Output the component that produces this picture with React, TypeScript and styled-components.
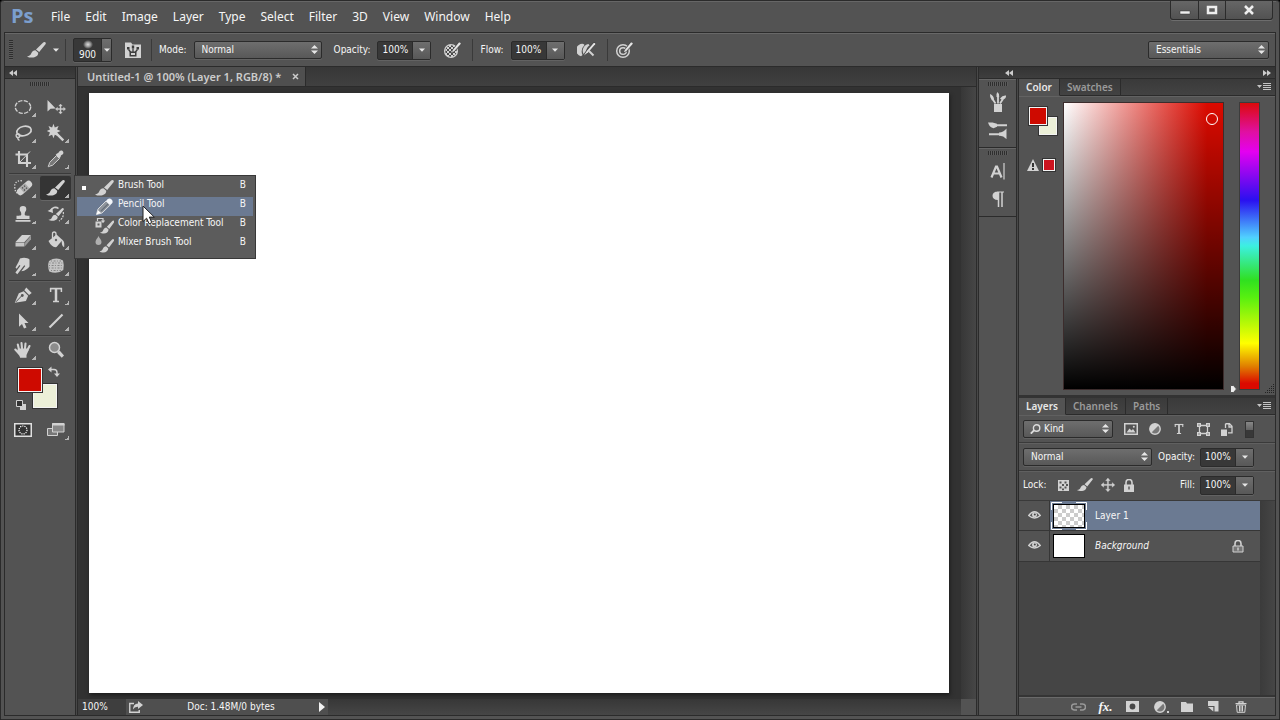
import React from 'react';
import styled, { createGlobalStyle, css } from 'styled-components';

const uiFont = '"DejaVu Sans Condensed", "Noto Sans", sans-serif';
const titleFont = '"Noto Sans", "Open Sans", sans-serif';
const dark = '#2b2b2b';
const panel = '#535353';
const glyph = '#d2d2d2';

const GlobalStyle = createGlobalStyle`
  * { box-sizing: border-box; }
  body { margin: 0; background: #000; font-family: ${uiFont}; font-size: 10px; line-height: 12px; color: #f6f6f6; }
  button, input, select { font: inherit; color: inherit; margin: 0; padding: 0; border: 0; background: none; border-radius: 0; }
  button { cursor: default; }
  svg { display: block; flex: none; }
`;

/* ---------- window frame ---------- */

const Frame = styled.div`
  min-height: 100vh;
  display: flex;
  flex-direction: column;
  background: ${panel};
  border: 1px solid ${dark};
  border-radius: 3px 3px 0 0;
  padding: 0 3px 3px;
`;
const MenuBar = styled.header`
  display: flex;
  height: 31px;
  padding: 0 3px 0 7px;
  border-top: 1px solid #666;
`;
const Logo = styled.span`
  width: 33px;
  font: bold 20px/27px "Open Sans", sans-serif;
  color: #7c9fce;
`;
const MenuItems = styled.nav`
  flex: 1;
  display: flex;
`;
const MenuItem = styled.button`
  padding: 0 8px 0 7px;
  font: 12px/28px ${titleFont};
`;
const WindowButtons = styled.div`
  display: flex;
  height: 19px;
  margin-top: -1px;
  border: 1px solid ${dark};
  border-top: 0;
  border-radius: 0 0 3px 3px;
  background: linear-gradient(#666, #525252);
  box-shadow: 0 1px #6d6d6d;
`;
const WindowButton = styled.button<{ $wide?: boolean }>`
  display: grid;
  place-items: center;
  width: ${p => (p.$wide ? 47 : 27)}px;
  & + & { border-left: 1px solid ${dark}; }
`;
const Body = styled.div`
  flex: 1;
  display: flex;
  flex-direction: column;
  border: 1px solid ${dark};
`;

/* ---------- shared controls ---------- */

const well = css`
  border: 1px solid ${dark};
  border-radius: 2px;
  box-shadow: 0 1px #626262;
`;
const SelectBox = styled.span<{ $grow?: boolean }>`
  position: relative;
  display: block;
  ${p => p.$grow && 'flex: 1;'}
`;
const SelectField = styled.select<{ $width?: number; $indent?: number }>`
  appearance: none;
  display: block;
  width: ${p => (p.$width ? `${p.$width}px` : '100%')};
  height: 18px;
  padding: 0 18px 0 ${p => p.$indent ?? 7}px;
  background: linear-gradient(#6e6e6e, #585858);
  ${well}
`;
const SelectMark = styled.span<{ $left?: boolean }>`
  position: absolute;
  top: 4px;
  ${p => (p.$left ? 'left: 7px;' : 'right: 4px;')}
  pointer-events: none;
`;
const NumberBox = styled.span`
  display: flex;
  width: 54px;
  height: 19px;
  background: #383838;
  ${well}
`;
const NumberInput = styled.input`
  width: 34px;
  padding-left: 4px;
`;
const DropButton = styled.button`
  flex: 1;
  display: grid;
  place-items: center;
  border-left: 1px solid ${dark};
  background: linear-gradient(#6e6e6e, #585858);
`;
const Grip = styled.span<{ $vertical?: boolean }>`
  display: block;
  width: ${p => (p.$vertical ? 4 : 20)}px;
  height: ${p => (p.$vertical ? 20 : 4)}px;
  background: repeating-linear-gradient(${p => (p.$vertical ? '180deg' : '90deg')}, #2e2e2e 0 1px, #5c5c5c 1px 2px);
`;

const Updown = () => (
  <svg width="7" height="9" viewBox="0 0 7 9" fill="#e6e6e6"><path d="M3.5 0 7 3.6H0zM3.5 9 7 5.4H0z" /></svg>
);
const Down = () => (
  <svg width="6" height="4" viewBox="0 0 6 4" fill="#e6e6e6"><path d="M0 .5h6L3 3.8z" /></svg>
);

function Dropdown({ label, value, width, lens }: { label: string; value: string; width?: number; lens?: boolean }) {
  return (
    <SelectBox $grow={!width}>
      <SelectField aria-label={label} $width={width} $indent={lens ? 20 : undefined} defaultValue={value}>
        <option>{value}</option>
      </SelectField>
      {lens && (
        <SelectMark $left>
          <svg width="11" height="10" viewBox="0 0 11 10" fill="none" stroke="#dcdcdc" strokeWidth="1.4">
            <circle cx="6.6" cy="4" r="3.2" /><path d="M4.2 6.2 .8 9.6" strokeWidth="1.9" />
          </svg>
        </SelectMark>
      )}
      <SelectMark><Updown /></SelectMark>
    </SelectBox>
  );
}
function Percent({ id }: { id: string }) {
  return (
    <NumberBox>
      <NumberInput id={id} defaultValue="100%" />
      <DropButton aria-label="Open slider"><Down /></DropButton>
    </NumberBox>
  );
}

/* ---------- icons ---------- */

const Icon = ({ w = 20, h = 20, children }: { w?: number; h?: number; children: React.ReactNode }) => (
  <svg width={w} height={h} viewBox={`0 0 ${w} ${h}`} fill={glyph}>{children}</svg>
);
const Stroke = ({ d, w = 1.5, c = glyph, dash }: { d: string; w?: number; c?: string; dash?: string }) => (
  <path d={d} fill="none" stroke={c} strokeWidth={w} strokeDasharray={dash} />
);
const brushPath = 'M17.200 0Q19.200 0 18.700 1.900L12.200 10 9 7.400 16.200.5ZM8.400 8.300 11.200 10.700C11.400 13.600 8.600 15.600 5 15.600 3 15.600 1.200 15.200 0 14.400 2.600 14 3.600 13 4.300 11.300 5.100 9.300 6.600 8.300 8.400 8.300Z';
const BrushIcon = () => <Icon w={19} h={16}><path d={brushPath} /></Icon>;
const SmallBrush = () => <Icon w={16} h={14}><path d={brushPath} transform="scale(.84)" /></Icon>;
const PencilIcon = () => (
  <Icon w={19} h={17}>
    <path d="M1.500 16.500 3 11 11 3 15.200 7 7 15Z" fill="#8f959c" stroke="#d5d8dc" />
    <path d="M1.500 16.500 3 12.200 6 15Z" fill="#fff" />
    <Stroke d="M6 13 13 6" c="#666e78" w={1.300} />
    <path d="m11 3 1.500-1.700a3.100 3.100 0 0 1 4.400 4.300L15.200 7Z" fill="#f2f6fa" />
  </Icon>
);
const ReplaceIcon = () => (
  <Icon w={19} h={17}>
    <path d={brushPath} transform="translate(5 3.500) scale(.76 .84)" />
    <path d="M.5 4.500h6v6h-6zM2.500 6.500v2h2v-2z" fillRule="evenodd" />
    <Stroke d="M2.500 4V1.500H8V4" w={1.200} /><path d="M5.800 3.500h4.400L8 6.300z" />
  </Icon>
);
const MixerIcon = () => (
  <Icon w={19} h={17}>
    <path d={brushPath} transform="translate(4.500 3) scale(.78 .86)" />
    <path d="M3.500 0C4.500 2.500 6.500 3.800 6.500 6a3 3 0 0 1-6 0C.5 3.800 2.500 2.500 3.500 0z" fill="#b0b0b0" />
  </Icon>
);
const LockIcon = ({ outline }: { outline?: boolean }) => (
  <Icon w={12} h={13}>
    <Stroke d="M3 6V3.500a3 3 0 0 1 6 0V6" w={1.600} />
    {outline
      ? <><path d="M1 6h10v6H1z" fill="#777" stroke={glyph} /><path d="M5.300 7.500h1.400v3H5.300z" /></>
      : <path d="M1 5.500h10V13H1zm4.300 2v3h1.400v-3z" fillRule="evenodd" />}
  </Icon>
);
const MarqueeIcon = () => (
  <Icon><ellipse cx="10" cy="10" rx="7.700" ry="6.400" fill="none" stroke={glyph} strokeWidth="1.400" strokeDasharray="4.200 1.400" /></Icon>
);
const arrowsPath = 'M9 0 12 3.500H9.800V8.200H14.500V6L18 9 14.500 12V9.800H9.800V14.500H12L9 18 6 14.500H8.200V9.800H3.500V12L0 9 3.500 6V8.200H8.200V3.500H6Z';
const MoveIcon = () => (
  <Icon><path d="M1.500 3v11.500l3-2.800 5.200-.2z" /><path d={arrowsPath} transform="translate(9.500 7) scale(.56)" stroke={glyph} strokeWidth=".7" /></Icon>
);
const LassoIcon = () => (
  <Icon>
    <ellipse cx="11" cy="8" rx="7.300" ry="4.600" fill="none" stroke={glyph} strokeWidth="1.700" transform="rotate(-13 11 8)" />
    <circle cx="5" cy="12.500" r="1.900" fill="none" stroke={glyph} strokeWidth="1.300" /><Stroke d="M4.500 14.300q.5 2.400 2 3.200" w={1.400} />
  </Icon>
);
const WandIcon = () => (
  <Icon>
    <path d="m7.500.800 1.300 3.600 3.800-1.500-1.500 3.700 3.500 1.400-3.500 1.500 1.500 3.700-3.800-1.500-1.300 3.600-1.400-3.600-3.600 1.500 1.500-3.700L.8 8l3.200-1.400-1.500-3.700 3.600 1.500z" />
    <Stroke d="m9.500 9.700 7.800 7.700" w={2.400} />
  </Icon>
);
const CropIcon = () => (
  <Icon><Stroke d="M2.500 5.500h11.500v12.500M6 2v12h12" w={2.100} /><Stroke d="m7 13 10-10.500" w={1} /></Icon>
);
const DropperIcon = () => (
  <Icon>
    <path d="m11 4.500 1.200-.6 1.300-1.700c2-2.200 5.300.8 3.300 3l-1.900 1.300-.3 1.500-1.300 1.200-3.600-3.500z" />
    <path d="m10.500 6.500 3 3-7 6.800-2.700.8-1 .8-.8-.8.900-1 .7-2.600z" fill="#777" stroke={glyph} />
  </Icon>
);
const HealIcon = () => (
  <Icon>
    <Stroke d="M9 2.800C3 2 1.200 6 1.800 9.500 2 13 3 14.500 5 15.500" w={1.300} dash="1.400 1.400" />
    <g transform="rotate(-42 11.500 10)">
      <rect x="2.500" y="6.500" width="18" height="7" rx="3.500" /><rect x="8" y="6.500" width="7" height="7" fill="#aaa" />
      <path d="M9.500 8h1.300v1.300H9.500zm2.700 0h1.300v1.300h-1.300zM9.500 10.800h1.300v1.300H9.500zm2.700 0h1.300v1.300h-1.300z" fill="#4c4c4c" />
    </g>
  </Icon>
);
const StampIcon = () => (
  <Icon><path d="M10 2a3.300 3.300 0 0 1 3.300 3.300c0 2-1.600 2.600-1.600 4.700 0 1.500.6 1.700 4.800 1.700V15h-13v-3.300c4.200 0 4.800-.2 4.800-1.700 0-2.100-1.600-2.700-1.600-4.700A3.300 3.300 0 0 1 10 2zM2.500 16h15v1.700h-15z" /></Icon>
);
const HistoryIcon = () => (
  <Icon>
    <path d={brushPath} transform="translate(2.500 4) scale(.82)" />
    <Stroke d="M4 7.500C6 3 10 2.500 12.500 4.500" w={1.600} /><path d="M1.500 7 7 9 6.500 4.500z" />
    <Stroke d="M17.300 8c.5 4-1 7-4.300 9" w={1.200} dash="2 1.200" />
  </Icon>
);
const EraserIcon = () => (
  <Icon><path d="M2.500 12 9 5h9l-6.500 7z" /><path d="M2.500 12.500h9v4h-9z" fill="#c5c5c5" /><path d="M12 12.500 18 5.500v3.700l-6 7z" fill="#999" /></Icon>
);
const BucketIcon = () => (
  <Icon>
    <path d="m2.500 11 8-6.500 6 5.500-6 7q-4.500 1-8-6z" /><path d="M15.500 9.500c3 1.200 3 4 2.700 7.500-2.200-.5-2.400-3-2.700-7.500z" />
    <Stroke d="M10 10V4q0-2-1.800-2T6.500 4v4" w={1.300} /><circle cx="10" cy="10" r="1.200" fill="#666" />
  </Icon>
);
const SmudgeIcon = () => (
  <Icon>
    <path d="M7 2.500c4-1.500 8-.5 9.500 1v7c-2 2.500-4 4.200-8.200 4.800l4-5.300-1-.8-7 9-1.900-1.700 5-6.700-1-.7-2.700 3.600-1.200-1.200L5.500 6z" />
  </Icon>
);
const SpongeIcon = () => (
  <Icon>
    <path d="M3 5q7-4.500 14-.5 1.500 5 .3 9.500Q11 18.800 3.300 15.500 1.200 10 3 5z" fill="#c4c4c4" />
    <Stroke d="M3.500 7h13M3 9.500h14M3 12h14M5 14.500h10M5 5h10" c="#858585" w={1} dash="1 1.600 2 1.300" />
  </Icon>
);
const PenIcon = () => (
  <Icon>
    <path d="m1.800 17.700 4-9.500 4.900-2 4.500 4.500-2.300 5.200z" /><path d="m11.300 5.200 2-2.800 5.400 5.500-2.600 2z" />
    <Stroke d="M3 16.800 8.500 11" c="#555" w={1} /><circle cx="9.300" cy="10.500" r="1.400" fill="#555" />
  </Icon>
);
const TypeIcon = ({ s = 20 }: { s?: number }) => (
  <svg width={s} height={s} viewBox="0 0 20 20" stroke={glyph} fill="none">
    <path d="M4 3.600h12" strokeWidth="1.700" /><path d="M4.600 3v4M15.400 3v4M7 16.400h6" strokeWidth="1.500" /><path d="M10 3.500v13" strokeWidth="2.500" />
  </svg>
);
const ArrowIcon = () => <Icon><path d="M6 2.500v13.300l3-2.800 2 4.500 2.500-1.100-2-4.500h4z" /></Icon>;
const LineIcon = () => <Icon><Stroke d="M3.500 16.500 16.500 3.500" w={2.100} /></Icon>;
const HandIcon = () => (
  <Icon>
    <g fill="none" stroke={glyph} strokeLinecap="round" strokeWidth="2.100">
      <path d="m6 9.500-1.200-5M9 8.500 8.500 3M12 8.500 12.500 3.500M14.500 10 16.500 6M6 13.500 2.300 9.500" />
    </g>
    <path d="M5 8.500h10l.5 2-2 4.500v2.700H7.200L6.500 16 3.800 11.800z" />
  </Icon>
);
const ZoomIcon = () => (
  <Icon><circle cx="8.500" cy="7.500" r="5" fill="#8c8c8c" stroke={glyph} strokeWidth="1.500" /><path d="m12 11.500 1.600-1 4.400 5-2.200 2.200-4.700-4.800z" /></Icon>
);
const MaskIcon = () => (
  <Icon w={18} h={14}>
    <rect x=".75" y=".75" width="16.500" height="12.500" fill="#333" stroke="#e0e0e0" strokeWidth="1.500" />
    <circle cx="9" cy="7" r="4" fill="none" stroke="#fff" strokeWidth="1.200" strokeDasharray="1.200 1" />
  </Icon>
);
const ScreenIcon = () => (
  <Icon w={18} h={14}>
    <path d="M.5 5.500h10v7H.5z" fill="#777" stroke={glyph} /><path d="M5.500.5h11.500v8.500H5.500z" fill="#888" stroke={glyph} /><path d="M5 .5h12.500v2H5z" />
  </Icon>
);
const PanelBrushIcon = () => (
  <Icon w={17} h={18}>
    <path d="M1 1.500h6l1.500 2H17V17H1z" />
    <path d="M3 6h2.500v2.500H3zM12.500 6H15v2.500h-2.500zM7.800 4.500h2.400v3H7.800z" fill="#3c3c3c" />
    <Stroke d="M4.500 8.500 7 11.500M13.500 8.500 11 11.500M9 7.500v4" c="#3c3c3c" w={1.300} />
    <path d="M5.500 10.500h7v5h-7z" fill="#3c3c3c" /><path d="M7 12h4v2H7z" />
  </Icon>
);
const Stylus = () => (
  <>
    <path d="M15.300 1Q18.800 0 18.200 3.200L11.600 10.800 8 12.500 9.300 8.700z" fill="#484848" />
    <path d="M15.900 1.600Q18.200 1 17.700 3L11.200 10.200 9 11.300 9.800 9z" fill="#e4e4e4" />
  </>
);
const PressureOpacityIcon = () => (
  <Icon w={19} h={18}>
    <circle cx="8" cy="10" r="6.400" fill="#4a4a4a" stroke={glyph} strokeWidth="1.300" />
    <path d="M4 6h2v2H4zM8 6h2v2H8zM12 6h1.500v2H12zM2.500 8H4v2H2.500zM6 8h2v2H6zM10 8h2v2h-2zM4 10h2v2H4zM8 10h2v2H8zM12 10h2v2h-2zM6 12h2v2H6zM10 12h2v2h-2zM2.500 12H4v2H2.500zM4 14h2v1.500H4zM8 14h2v2H8zM6 4h2v2H6zM10 4h2v2h-2z" />
    <Stylus />
  </Icon>
);
const AirbrushIcon = () => (
  <Icon w={20} h={18}>
    <path d="M6.500 3A6 6 0 0 0 4 15.200L5.500 14A9 9 0 0 1 7.500 4zM11.500 3A7 7 0 0 0 7.500 14.500L9.500 12.500Q8.500 7 12.500 4.500z" />
    <path d="M16.300 1.300Q19.500.5 18.800 3.300L11.500 11.500 7 15 6 14 9.500 9z" fill="#484848" />
    <path d="M16.700 2Q18.800 1.500 18.200 3.300L11.300 11.200 7 14.300 10 9.700z" fill="#e4e4e4" />
    <Stroke d="M11.500 9.500 16.500 14.500" w={2} />
  </Icon>
);
const PressureSizeIcon = () => (
  <Icon w={19} h={18}>
    <g fill="none" stroke={glyph} strokeWidth="1.500"><circle cx="8" cy="10" r="6.300" /><circle cx="8" cy="10" r="3.300" /></g>
    <Stylus />
  </Icon>
);
const PresetsIcon = () => (
  <Icon w={18} h={20}>
    <path d="M5 12h8v8H5z" /><Stroke d="M6.500 11.500 3.500 7M9 11.500V4.500M11 11.500 14 7" w={1.800} />
    <path d="M1 2q4 1.500 4 5.500L3 8.500Q.5 5.500 1 2zM7.500 5q-.5-3.500 1-5 2 1.500 1.700 5zM11 6.500Q13.500 3 17 3.500q.5 3-4 4.500z" />
  </Icon>
);
const BrushPanelIcon = () => (
  <Icon w={20} h={18}>
    <Stroke d="M7 4.200h12M1 13.200h11" w={2} />
    <path d="M0 1.500h4.500L9 2.800v3L5.500 7.200Q1.500 6.500 0 1.500zM11 11.500q4 .2 7.500-4v10.700q-3.500-4-7.500-3.500z" />
  </Icon>
);
const CharacterIcon = () => (
  <Icon w={16} h={18}><Stroke d="M1.500 15.500 6 4.500h1L11.500 15.500M3.500 11.500h6" w={2.200} /><Stroke d="M14 1v16.500" w={1.200} /></Icon>
);
const ParagraphIcon = () => (
  <Icon w={14} h={18}><path d="M6 1.500h7v1H6zM7 1.500v8.500q-5.500-.3-5.500-4.300T7 1.500z" /><Stroke d="M7.500 2v15M11 2v15" w={1.500} /></Icon>
);
const ImageIcon = () => (
  <Icon w={14} h={12}><path d="M.75.75h12.500v10.500H.75z" fill="none" stroke={glyph} strokeWidth="1.500" /><path d="m2.500 9.500 3-4 2 2 1.500-1.500 2.500 3.500z" /><circle cx="9.800" cy="3.800" r="1" /></Icon>
);
const HalfIcon = () => (
  <Icon w={12} h={12}><circle cx="6" cy="6" r="5.200" fill="#777" stroke={glyph} strokeWidth="1.400" /><path d="M2.300 9.700A5.200 5.200 0 0 1 9.700 2.300z" /></Icon>
);
const ShapeIcon = () => (
  <Icon w={13} h={13}><Stroke d="M2.500 2.500h8v8h-8z" w={1.300} /><path d="M0 0h4v4H0zM9 0h4v4H9zM0 9h4v4H0zM9 9h4v4H9z" /><path d="M1.400 1.400h1.200v1.200H1.400zM10.400 1.400h1.200v1.200h-1.200zM1.400 10.400h1.200v1.200H1.400zM10.400 10.400h1.200v1.200h-1.200z" fill="#555" /></Icon>
);
const SmartIcon = () => (
  <Icon w={12} h={13}><path d="M4.500.75h4L11 3.300v6.500H7M4.500.75V5M8 .75V4h3" fill="none" stroke={glyph} strokeWidth="1.300" /><path d="M0 6.500h6V13H0z" /></Icon>
);
const CheckerIcon = () => (
  <Icon w={11} h={11}><path d="M0 0h11v11H0z" /><path d="M1.500 1.500h2v2h-2zM6.500 1.500h2v2h-2zM4 4h2v2H4zM8 4h2v2H8zM1.500 6.500h2v2h-2zM6.500 6.500h2v2h-2zM4 8.500h2v1.700H4z" fill="#555" /></Icon>
);
const ArrowsIcon = () => <Icon w={14} h={14}><path d={arrowsPath} transform="scale(.77)" stroke={glyph} strokeWidth=".4" /></Icon>;
const EyeIcon = () => (
  <Icon w={13} h={10}>
    <path d="M.7 5.500Q6.500-2 12.300 5.500 6.500 10.500.7 5.500z" fill="#5a5a5a" stroke={glyph} strokeWidth="1.300" /><circle cx="6.500" cy="4.800" r="2.500" /><circle cx="6.800" cy="4.400" r="1" fill="#444" />
  </Icon>
);
const LinkIcon = () => (
  <Icon w={15} h={8}><g fill="none" stroke="#999" strokeWidth="1.500"><path d="M6 1H3.500a3 3 0 0 0 0 6H6M9 1h2.500a3 3 0 0 1 0 6H9M4.500 4h6" /></g></Icon>
);
const LayerMaskIcon = () => <Icon w={13} h={11}><path d="M0 0h13v11H0z" /><circle cx="6.500" cy="5.500" r="2.900" fill="#484848" /></Icon>;
const FolderIcon = () => <Icon w={12} h={10}><path d="M0 0h5l1 1.500h6V10H0z" /></Icon>;
const NewIcon = () => <Icon w={11} h={11}><path d="M0 0h10.500v10.500H6.500V5H0z" /><path d="M0 6h5.300v4.500z" /></Icon>;
const TrashIcon = () => (
  <Icon w={12} h={12}><Stroke d="M.5 2.700h11M4 2.500V.8h4v1.700" w={1.300} /><Stroke d="M1.500 4h9l-.7 7.300H2.200zM4.500 4.500v6M6 4.500v6M7.500 4.500v6" w={1} /></Icon>
);

/* ---------- options bar ---------- */

const OptionsBar = styled.div`
  display: flex;
  align-items: center;
  height: 34px;
  padding: 0 6px 0 4px;
  border-top: 1px solid #686868;
  border-bottom: 1px solid ${dark};
`;
const OptionGroup = styled.div<{ $gap?: number }>`
  display: flex;
  align-items: center;
  gap: ${p => p.$gap ?? 12}px;
  height: 22px;
  padding: 0 10px 0 7px;
  & + & { border-left: 1px solid #3a3a3a; }
`;
const PresetGroup = styled(OptionGroup)`
  padding: 0 6px 0 14px;
`;
const IconButton = styled.button`
  display: grid;
  place-items: center;
`;
const Field = styled.label`
  display: flex;
  align-items: center;
  gap: 7px;
`;
const BrushPicker = styled.button`
  display: flex;
  width: 39px;
  height: 24px;
  background: #383838;
  ${well}
`;
const BrushSize = styled.span`
  width: 27px;
  padding-top: 1px;
  text-align: center;
  line-height: 10px;
`;
const SoftDot = styled.span`
  display: block;
  width: 10px;
  height: 9px;
  margin: 0 auto 1px;
  background: radial-gradient(closest-side, #ddd, #9a9a9a 50%, #383838);
`;
const PickerArrow = styled.span`
  flex: 1;
  display: grid;
  place-items: center;
  border-left: 1px solid ${dark};
  background: linear-gradient(#6e6e6e, #585858);
`;
const Spacer = styled.span`flex: 1;`;

/* ---------- tools ---------- */

const Workspace = styled.div`
  flex: 1;
  display: flex;
`;
const Divider = styled.div`
  width: 3px;
  background: #484848;
  border: solid ${dark};
  border-width: 0 1px;
`;
const Tools = styled.aside`
  width: 70px;
  display: flex;
  flex-direction: column;
`;
const Strip = styled.div`
  display: flex;
  align-items: center;
  justify-content: space-between;
  height: 12px;
  padding: 0 4px;
  background: linear-gradient(#343434, #3e3e3e);
  border-bottom: 1px solid ${dark};
`;
const GripRow = styled.div<{ $tall?: boolean }>`
  display: flex;
  justify-content: center;
  height: ${p => (p.$tall ? 15 : 8)}px;
  padding-top: ${p => (p.$tall ? 3 : 2)}px;
`;
const ToolGroup = styled.div`
  display: grid;
  grid-template-columns: 33px 33px;
  margin: 0 2px;
`;
const Rule = styled.hr`
  width: 62px;
  height: 3px;
  margin: 0 auto;
  border: 0;
  background: linear-gradient(transparent 1px, #3a3a3a 1px 2px, #5e5e5e 2px);
`;
const Slot = styled.div`
  position: relative;
  height: 26px;
`;
const Tool = styled.button<{ $active?: boolean }>`
  position: relative;
  display: grid;
  place-items: center;
  width: 31px;
  height: 24px;
  margin: 1px 1px 1px 0;
  border-radius: 2px;
  ${p => p.$active && css`background: #343434; box-shadow: 0 1px #666;`}
`;
const Corner = styled.span`
  position: absolute;
  right: 2px;
  bottom: 2px;
  width: 4px;
  height: 4px;
  background: linear-gradient(135deg, transparent 50%, #b5b5b5 50%);
`;
const Swatches = styled.div`
  position: relative;
  height: 54px;
`;
const SwatchButton = styled.button<{ $color: string; $x: number; $y: number; $size: number }>`
  position: absolute;
  left: ${p => p.$x}px;
  top: ${p => p.$y}px;
  width: ${p => p.$size}px;
  height: ${p => p.$size}px;
  background: ${p => p.$color};
  border: 1px solid #333;
  box-shadow: inset 0 0 0 1px #f4f4f4;
`;
const Overlay = styled.button<{ $x: number; $y: number }>`
  position: absolute;
  left: ${p => p.$x}px;
  top: ${p => p.$y}px;
`;

const Flyout = styled.ul`
  position: absolute;
  z-index: 5;
  left: 34px;
  top: 0;
  width: 182px;
  margin: 0;
  padding: 2px 2px 4px;
  list-style: none;
  background: #5c5c5c;
  border: 1px solid #383838;
`;
const FlyoutItem = styled.button<{ $hot?: boolean }>`
  display: flex;
  align-items: center;
  width: 100%;
  height: 19px;
  padding: 0 7px 0 5px;
  text-align: left;
  background: ${p => (p.$hot ? '#6b7a92' : 'transparent')};
`;
const Marker = styled.span<{ $on?: boolean }>`
  width: 4px;
  height: 4px;
  margin-right: 9px;
  background: ${p => (p.$on ? '#fff' : 'transparent')};
`;
const FlyoutText = styled.span<{ $grow?: boolean }>`
  ${p => p.$grow && 'flex: 1; margin-left: 4px;'}
  padding-bottom: 5px;
`;
const Pointer = styled.span`
  position: absolute;
  left: 67px;
  top: 29px;
`;

/* ---------- document ---------- */

const Document = styled.main`
  flex: 1;
  display: flex;
  flex-direction: column;
  min-width: 0;
`;
const TabStrip = styled.div`
  display: flex;
  height: 20px;
  background: linear-gradient(#373737, #404040);
  border-bottom: 1px solid ${dark};
`;
const DocTab = styled.div`
  display: flex;
  align-items: center;
  gap: 11px;
  padding: 0 6px 0 9px;
  background: #4f4f4f;
  border-right: 1px solid ${dark};
  font: 600 11px/16px ${titleFont};
  color: #ccc;
`;
const Stage = styled.div`
  flex: 1;
  display: flex;
  background: #323232;
`;
const Canvas = styled.div`
  flex: 1;
  margin: 6px 12px 6px 11px;
  background: #fff;
  box-shadow: 1px 2px 4px #1c1c1c;
`;
const VScroll = styled.div`
  width: 15px;
  background: linear-gradient(90deg, #373737, #464646);
`;
const Status = styled.footer`
  display: flex;
  height: 16px;
  align-items: stretch;
`;
const ZoomInput = styled.input`
  width: 48px;
  padding-left: 4px;
  background: #3e3e3e;
`;
const StatusInfo = styled.div`
  display: flex;
  align-items: center;
  justify-content: space-between;
  width: 202px;
  padding: 0 3px;
  background: #4f4f4f;
`;
const HScroll = styled.div`
  flex: 1;
  background: linear-gradient(#373737, #464646);
`;
const ScrollCorner = styled.div`
  width: 15px;
  background: ${panel};
`;

/* ---------- right dock ---------- */

const Dock = styled.div`
  display: flex;
  flex-direction: column;
`;
const DockHeader = styled(Strip)`
  padding: 0 4px 0 26px;
`;
const DockBody = styled.div`
  flex: 1;
  display: flex;
`;
const IconColumn = styled.div`
  width: 37px;
`;
const IconSet = styled.div`
  height: 69px;
  border-top: 1px solid #666;
  border-bottom: 1px solid ${dark};
`;
const PanelButton = styled.button`
  display: grid;
  place-items: center;
  width: 38px;
  height: 28px;
`;
const Panels = styled.div`
  width: 256px;
  display: flex;
  flex-direction: column;
`;
const PanelTabs = styled.div`
  display: flex;
  height: 17px;
  background: linear-gradient(#3a3a3a, #434343);
`;
const PanelTab = styled.button<{ $on?: boolean }>`
  padding: 0 7px;
  font: 600 10px/15px ${titleFont};
  color: ${p => (p.$on ? '#e8e8e8' : '#9a9a9a')};
  background: ${p => (p.$on ? panel : 'transparent')};
  border-right: 1px solid ${dark};
  border-bottom: 1px solid ${p => (p.$on ? panel : dark)};
`;
const TabRest = styled.div`
  flex: 1;
  display: flex;
  align-items: center;
  justify-content: flex-end;
  padding-right: 4px;
  border-bottom: 1px solid ${dark};
`;
const ColorBody = styled.div`
  position: relative;
  display: flex;
  padding: 5px 15px 5px 0;
  border-top: 1px solid #626262;
  border-bottom: 3px solid #333;
`;
const ColorSide = styled.div`
  position: relative;
  width: 44px;
`;
const ColorField = styled.div`
  position: relative;
  flex: 1;
  height: 288px;
  border: 1px solid #3c2c2c;
  background: linear-gradient(transparent, #000), linear-gradient(90deg, #fff, #dc0a00 90%);
`;
const Ring = styled.span`
  position: absolute;
  right: 5px;
  top: 10px;
  width: 12px;
  height: 12px;
  border: 1px solid #fff;
  border-radius: 50%;
`;
const HueBar = styled.div`
  width: 21px;
  margin-left: 15px;
  border: 1px solid #3c3c3c;
  background: linear-gradient(#dc0a0a, #e010a0 10%, #e400f0 17%, #2a10f0 34%, #50d0ff 47%, #3cf0e0 50%, #30e020 62%, #58f010 68%, #ffff00 84%, #e08000 92%, #dc0a00 98%);
`;
const HueHandle = styled.span`
  position: absolute;
  left: 211px;
  bottom: 2px;
`;
const ResizeDots = styled.span`
  position: absolute;
  right: 1px;
  bottom: 1px;
`;

const LayerRow = styled.div<{ $tall?: boolean }>`
  display: flex;
  align-items: center;
  height: ${p => (p.$tall ? 30 : 28)}px;
  padding: 0 21px ${p => (p.$tall ? 2 : 0)}px 4px;
  border-top: 1px solid #606060;
  border-bottom: 1px solid #3a3a3a;
`;
const IconRow = styled.div<{ $gap: number }>`
  display: flex;
  align-items: center;
  gap: ${p => p.$gap}px;
  padding: 0 9px 0 11px;
`;
const FilterSwitch = styled.button`
  width: 9px;
  height: 17px;
  margin-left: auto;
  border: 1px solid #333;
  background: linear-gradient(#888 0, #666 50%, #383838 50%);
`;
const RightField = styled(Field)`
  margin-left: auto;
  gap: 5px;
`;
const LayerList = styled.div`
  flex: 1;
  display: flex;
  background: #454545;
  border-bottom: 2px solid #353535;
`;
const LayerItems = styled.ul`
  flex: 1;
  margin: 0;
  padding: 0;
  list-style: none;
`;
const LayerItem = styled.li<{ $on?: boolean }>`
  display: flex;
  height: ${p => (p.$on ? 30 : 31)}px;
  background: ${p => (p.$on ? `linear-gradient(90deg, ${panel} 31px, #6b7a92 31px)` : panel)};
  border-bottom: 1px solid #363636;
`;
const EyeButton = styled.button`
  display: grid;
  place-items: center;
  width: 31px;
  padding-bottom: 2px;
  border-right: 1px solid #363636;
`;
const Thumb = styled.span<{ $on?: boolean }>`
  position: relative;
  align-self: center;
  width: 32px;
  height: 24px;
  margin: 0 10px 0 3px;
  border: 1px solid #000;
  background: ${p => (p.$on ? 'repeating-conic-gradient(#ccc 0 25%, #fff 0 50%) 0 0 / 8px 8px' : '#fff')};
`;
const ThumbCorners = styled.span`
  position: absolute;
  left: -3px;
  top: -3px;
`;
const LayerName = styled.span<{ $italic?: boolean }>`
  flex: 1;
  align-self: center;
  font-style: ${p => (p.$italic ? 'italic' : 'normal')};
`;
const LayerLock = styled.span`
  align-self: center;
  padding-right: 16px;
`;
const ListScroll = styled.div`
  width: 15px;
  background: linear-gradient(90deg, #3b3b3b, #464646);
`;
const LayerFooter = styled.div`
  display: grid;
  grid-template-columns: repeat(7, 27px);
  align-items: center;
  justify-content: end;
  height: 18px;
  padding-right: 21px;
  border-top: 1px solid #6a6a6a;
`;
const Effects = styled(IconButton)`
  font: italic bold 13px/14px "Liberation Serif", serif;
`;
const WithDot = styled(IconButton)`
  position: relative;
  &::after {
    content: '';
    position: absolute;
    right: 4px;
    bottom: 0;
    width: 2px;
    height: 2px;
    background: ${glyph};
  }
`;

const Collapse = ({ right }: { right?: boolean }) => (
  <svg width="8" height="6" viewBox="0 0 8 6" fill="#ccc"><path d={right ? 'M0 0l4 3-4 3zM4 0l4 3-4 3z' : 'M4 0v6L0 3zM8 0v6L4 3z'} /></svg>
);
const FlyMenu = () => (
  <svg width="14" height="8" viewBox="0 0 14 8" fill="#c4c4c4"><path d="M0 2h5L2.500 5zM6 0h8v1H6zM6 2h8v1H6zM6 4h8v1H6zM6 6h8v1H6z" /></svg>
);

const toolGroups: { name: string; icon: React.ReactNode; single?: boolean }[][] = [
  [
    { name: 'Elliptical Marquee', icon: <MarqueeIcon /> }, { name: 'Move', icon: <MoveIcon />, single: true },
    { name: 'Lasso', icon: <LassoIcon /> }, { name: 'Magic Wand', icon: <WandIcon /> },
    { name: 'Crop', icon: <CropIcon /> }, { name: 'Eyedropper', icon: <DropperIcon /> },
  ],
  [
    { name: 'Spot Healing', icon: <HealIcon /> }, { name: 'Brush', icon: <BrushIcon /> },
    { name: 'Clone Stamp', icon: <StampIcon /> }, { name: 'History Brush', icon: <HistoryIcon /> },
    { name: 'Eraser', icon: <EraserIcon /> }, { name: 'Paint Bucket', icon: <BucketIcon /> },
    { name: 'Smudge', icon: <SmudgeIcon /> }, { name: 'Sponge', icon: <SpongeIcon /> },
  ],
  [
    { name: 'Pen', icon: <PenIcon /> }, { name: 'Type', icon: <TypeIcon /> },
    { name: 'Path Selection', icon: <ArrowIcon /> }, { name: 'Line', icon: <LineIcon /> },
  ],
  [{ name: 'Hand', icon: <HandIcon /> }, { name: 'Zoom', icon: <ZoomIcon />, single: true }],
];
const brushTools = [
  { name: 'Brush Tool', icon: <BrushIcon /> },
  { name: 'Pencil Tool', icon: <PencilIcon /> },
  { name: 'Color Replacement Tool', icon: <ReplaceIcon /> },
  { name: 'Mixer Brush Tool', icon: <MixerIcon /> },
];
const menus = ['File', 'Edit', 'Image', 'Layer', 'Type', 'Select', 'Filter', '3D', 'View', 'Window', 'Help'];

function BrushFlyout() {
  return (
    <Flyout>
      {brushTools.map((t, i) => (
        <li key={t.name}>
          <FlyoutItem $hot={i === 1}>
            <Marker $on={i === 0} />
            {t.icon}
            <FlyoutText $grow>{t.name}</FlyoutText>
            <FlyoutText>B</FlyoutText>
          </FlyoutItem>
        </li>
      ))}
      <Pointer>
        <svg width="14" height="20" viewBox="0 0 14 20"><path d="M1 1v15.500l3.600-3.300 2.500 5.600 2.700-1.200-2.500-5.500h5z" fill="#fff" stroke="#222" /></svg>
      </Pointer>
    </Flyout>
  );
}

function ToolsPanel() {
  return (
    <Tools>
      <Strip><Collapse /></Strip>
      <GripRow $tall><Grip /></GripRow>
      {toolGroups.map((group, g) => (
        <React.Fragment key={g}>
          {g > 0 && <Rule />}
          <ToolGroup>
            {group.map(t => (
              <Slot key={t.name}>
                <Tool aria-label={t.name} $active={t.name === 'Brush'}>
                  {t.icon}
                  {!t.single && <Corner />}
                </Tool>
                {t.name === 'Brush' && <BrushFlyout />}
              </Slot>
            ))}
          </ToolGroup>
        </React.Fragment>
      ))}
      <Swatches>
        <SwatchButton aria-label="Background color" $color="#ecf0d8" $x={27} $y={20} $size={26} />
        <SwatchButton aria-label="Foreground color" $color="#ce0a00" $x={12} $y={4} $size={26} />
        <Overlay aria-label="Swap colors" $x={43} $y={3}>
          <Icon w={12} h={11}><Stroke d="M3 3.500h3q3 0 3 3V8" w={1.400} /><path d="M0 3.500 3.500.5v6zM6 7.500h6L9 11z" /></Icon>
        </Overlay>
        <Overlay aria-label="Default colors" $x={11} $y={37}>
          <Icon w={10} h={10}><path d="M4 4h6v6H4z" /><path d="M.5.500h6v6h-6z" fill="#333" stroke={glyph} /></Icon>
        </Overlay>
      </Swatches>
      <ToolGroup>
        <Slot><Tool aria-label="Quick mask"><MaskIcon /></Tool></Slot>
        <Slot><Tool aria-label="Screen mode"><ScreenIcon /><Corner /></Tool></Slot>
      </ToolGroup>
    </Tools>
  );
}

function ColorPanel() {
  return (
    <section>
      <PanelTabs>
        <PanelTab $on>Color</PanelTab>
        <PanelTab>Swatches</PanelTab>
        <TabRest><IconButton aria-label="Panel menu"><FlyMenu /></IconButton></TabRest>
      </PanelTabs>
      <ColorBody>
        <ColorSide>
          <SwatchButton aria-label="Background" $color="#ecf0d8" $x={19} $y={14} $size={20} />
          <SwatchButton aria-label="Foreground" $color="#ce0a00" $x={9} $y={4} $size={20} />
          <Overlay aria-label="Out of gamut" $x={8} $y={57}>
            <Icon w={12} h={12}><path d="M6 0 12 12H0z" /><path d="M5 4h2v4H5zM5 9h2v2H5z" fill="#333" /></Icon>
          </Overlay>
          <SwatchButton aria-label="Closest printable color" $color="#cc1420" $x={23} $y={56} $size={14} />
        </ColorSide>
        <ColorField><Ring /></ColorField>
        <HueBar />
        <HueHandle><svg width="7" height="8" viewBox="0 0 7 8"><path d="M.5.500h3L6.500 4l-3 3.500h-3z" fill="#eee" stroke="#555" /></svg></HueHandle>
        <ResizeDots>
          <Icon w={10} h={10}><Stroke d="M9.500 0v10M7.500 2v8M5.500 4v6M3.500 6v4M1.500 8v2" w={1} c="#222" dash="1 1" /></Icon>
        </ResizeDots>
      </ColorBody>
    </section>
  );
}

function LayersPanel() {
  return (
    <>
      <PanelTabs>
        <PanelTab $on>Layers</PanelTab>
        <PanelTab>Channels</PanelTab>
        <PanelTab>Paths</PanelTab>
        <TabRest><IconButton aria-label="Panel menu"><FlyMenu /></IconButton></TabRest>
      </PanelTabs>
      <LayerRow>
        <Dropdown label="Filter kind" value="Kind" width={90} lens />
        <IconRow $gap={11}>
          <IconButton aria-label="Pixel layers"><ImageIcon /></IconButton>
          <IconButton aria-label="Adjustment layers"><HalfIcon /></IconButton>
          <IconButton aria-label="Type layers"><TypeIcon s={14} /></IconButton>
          <IconButton aria-label="Shape layers"><ShapeIcon /></IconButton>
          <IconButton aria-label="Smart objects"><SmartIcon /></IconButton>
        </IconRow>
        <FilterSwitch aria-label="Toggle filtering" />
      </LayerRow>
      <LayerRow>
        <Dropdown label="Blend mode" value="Normal" width={129} />
        <RightField htmlFor="layer-opacity">Opacity:<Percent id="layer-opacity" /></RightField>
      </LayerRow>
      <LayerRow $tall>
        Lock:
        <IconRow $gap={8}>
          <IconButton aria-label="Lock transparency"><CheckerIcon /></IconButton>
          <IconButton aria-label="Lock pixels"><SmallBrush /></IconButton>
          <IconButton aria-label="Lock position"><ArrowsIcon /></IconButton>
          <IconButton aria-label="Lock all"><LockIcon /></IconButton>
        </IconRow>
        <RightField htmlFor="layer-fill">Fill:<Percent id="layer-fill" /></RightField>
      </LayerRow>
      <LayerList>
        <LayerItems>
          <LayerItem $on>
            <EyeButton aria-label="Layer 1 visibility"><EyeIcon /></EyeButton>
            <Thumb $on>
              <ThumbCorners>
                <svg width="36" height="28" viewBox="0 0 36 28" fill="none" stroke="#fff" strokeWidth="1"><path d="M.5 8V.500H11M25 .500h10.500V8M35.500 20v7.500H25M11 27.500H.500V20" /></svg>
              </ThumbCorners>
            </Thumb>
            <LayerName>Layer 1</LayerName>
          </LayerItem>
          <LayerItem>
            <EyeButton aria-label="Background visibility"><EyeIcon /></EyeButton>
            <Thumb />
            <LayerName $italic>Background</LayerName>
            <LayerLock><LockIcon outline /></LayerLock>
          </LayerItem>
        </LayerItems>
        <ListScroll />
      </LayerList>
      <LayerFooter>
        <IconButton aria-label="Link layers"><LinkIcon /></IconButton>
        <Effects>fx.</Effects>
        <IconButton aria-label="Add mask"><LayerMaskIcon /></IconButton>
        <WithDot aria-label="New adjustment"><HalfIcon /></WithDot>
        <IconButton aria-label="New group"><FolderIcon /></IconButton>
        <IconButton aria-label="New layer"><NewIcon /></IconButton>
        <IconButton aria-label="Delete layer"><TrashIcon /></IconButton>
      </LayerFooter>
    </>
  );
}

export default function App() {
  return (
    <Frame>
      <GlobalStyle />
      <MenuBar>
        <Logo>Ps</Logo>
        <MenuItems>{menus.map(m => <MenuItem key={m}>{m}</MenuItem>)}</MenuItems>
        <WindowButtons>
          <WindowButton aria-label="Minimize"><svg width="12" height="12" viewBox="0 0 12 12"><path d="M1 7h10v3H1z" fill="#eee" stroke="#333" strokeWidth=".5" /></svg></WindowButton>
          <WindowButton aria-label="Restore"><svg width="12" height="10" viewBox="0 0 12 10"><path d="M2 2h8v6H2z" fill="none" stroke="#eee" strokeWidth="2.500" /></svg></WindowButton>
          <WindowButton aria-label="Close" $wide><svg width="12" height="10" viewBox="0 0 12 10"><path d="m2 1 8 8m0-8L2 9" stroke="#eee" strokeWidth="2.500" /></svg></WindowButton>
        </WindowButtons>
      </MenuBar>
      <Body>
        <OptionsBar>
          <Grip $vertical />
          <PresetGroup $gap={7}>
            <IconButton aria-label="Brush tool preset"><BrushIcon /></IconButton>
            <IconButton aria-label="Tool presets"><Down /></IconButton>
          </PresetGroup>
          <OptionGroup>
            <BrushPicker aria-label="Brush preset">
              <BrushSize><SoftDot />900</BrushSize>
              <PickerArrow><Down /></PickerArrow>
            </BrushPicker>
            <IconButton aria-label="Toggle brush panel"><PanelBrushIcon /></IconButton>
          </OptionGroup>
          <OptionGroup>
            <Field>Mode:<Dropdown label="Mode" value="Normal" width={128} /></Field>
            <Field htmlFor="opacity">Opacity:<Percent id="opacity" /></Field>
            <IconButton aria-label="Pressure for opacity"><PressureOpacityIcon /></IconButton>
          </OptionGroup>
          <OptionGroup>
            <Field htmlFor="flow">Flow:<Percent id="flow" /></Field>
            <IconButton aria-label="Airbrush"><AirbrushIcon /></IconButton>
          </OptionGroup>
          <OptionGroup>
            <IconButton aria-label="Pressure for size"><PressureSizeIcon /></IconButton>
          </OptionGroup>
          <Spacer />
          <Dropdown label="Workspace" value="Essentials" width={121} />
        </OptionsBar>
        <Workspace>
          <ToolsPanel />
          <Divider />
          <Document>
            <TabStrip>
              <DocTab>
                Untitled-1 @ 100% (Layer 1, RGB/8) *
                <IconButton aria-label="Close document"><svg width="7" height="7" viewBox="0 0 7 7"><path d="m1 1 5 5m0-5L1 6" stroke="#ccc" strokeWidth="1.500" /></svg></IconButton>
              </DocTab>
            </TabStrip>
            <Stage><Canvas /><VScroll /></Stage>
            <Status>
              <ZoomInput aria-label="Zoom" defaultValue="100%" />
              <StatusInfo>
                <IconButton aria-label="Share">
                  <Icon w={14} h={12}><Stroke d="M5 2.500H.750v8.700h9.500V9" w={1.400} /><path d="M9 0 14 4 9 8V5.700Q5.500 5.500 4 8.500 4 3 9 2.400z" /></Icon>
                </IconButton>
                <span>Doc: 1.48M/0 bytes</span>
                <IconButton aria-label="Status options"><svg width="6" height="10" viewBox="0 0 6 10" fill="#f2f2f2"><path d="M0 0l6 5-6 5z" /></svg></IconButton>
              </StatusInfo>
              <HScroll />
              <ScrollCorner />
            </Status>
          </Document>
          <Divider />
          <Dock>
            <DockHeader><Collapse /><Collapse right /></DockHeader>
            <DockBody>
              <IconColumn>
                <IconSet>
                  <GripRow><Grip /></GripRow>
                  <PanelButton aria-label="Brush presets"><PresetsIcon /></PanelButton>
                  <PanelButton aria-label="Brush"><BrushPanelIcon /></PanelButton>
                </IconSet>
                <IconSet>
                  <GripRow><Grip /></GripRow>
                  <PanelButton aria-label="Character"><CharacterIcon /></PanelButton>
                  <PanelButton aria-label="Paragraph"><ParagraphIcon /></PanelButton>
                </IconSet>
              </IconColumn>
              <Divider />
              <Panels>
                <ColorPanel />
                <LayersPanel />
              </Panels>
            </DockBody>
          </Dock>
        </Workspace>
      </Body>
    </Frame>
  );
}
